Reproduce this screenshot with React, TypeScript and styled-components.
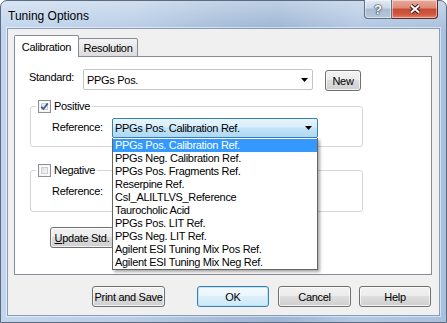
import styled, { createGlobalStyle } from 'styled-components';

const GlobalStyle = createGlobalStyle`
  html, body {
    margin: 0;
    padding: 0;
    overflow: hidden;
    background: #ffffff;
  }
  body {
    font-family: "Liberation Sans", Arial, sans-serif;
  }
`;

const Window = styled.div`
  box-sizing: border-box;
  width: 447px;
  height: 323px;
  display: flex;
  flex-direction: column;
  padding: 0 6px 6px 6px;
  border: 1px solid #5b6c82;
  border-radius: 7px 7px 0 0;
  background:
    linear-gradient(180deg, rgba(255, 255, 255, 0.35) 0px, rgba(255, 255, 255, 0) 28px),
    linear-gradient(90deg, #c3d6ee 0%, #b9cde6 30%, #a4bcd9 50%, #9db6d5 62%, #b3c8e3 80%, #aac0dd 100%);
`;

const TitleBar = styled.div`
  height: 28px;
  display: flex;
  justify-content: space-between;
  align-items: flex-start;
`;

const Caption = styled.div`
  margin: 8px 0 0 1px;
  font-size: 12px;
  line-height: 14px;
  color: #000;
`;

const CaptionButtons = styled.div`
  display: flex;
  margin: -1px 2px 0 0;
`;

const CaptionButton = styled.div<{ $close?: boolean }>`
  box-sizing: border-box;
  width: ${(p) => (p.$close ? 46 : 28)}px;
  height: 19px;
  display: flex;
  align-items: center;
  justify-content: center;
  border: 1px solid ${(p) => (p.$close ? '#5c2b25' : '#5f6f86')};
  border-top: none;
  border-left: ${(p) => (p.$close ? 'none' : undefined)};
  border-radius: ${(p) => (p.$close ? '0 0 4px 0' : '0 0 0 4px')};
  background: ${(p) =>
    p.$close
      ? 'linear-gradient(180deg, #e9aa9c 0%, #dc8a78 45%, #c74a34 50%, #d2573f 80%, #e0846c 100%)'
      : 'linear-gradient(180deg, #e3ebf4 0%, #ccd8e6 45%, #a9bbd1 50%, #b7c8dc 100%)'};
  box-shadow: inset 0 0 0 1px rgba(255, 255, 255, 0.45);
`;

const HelpGlyph = styled.span`
  font-weight: bold;
  font-size: 13px;
  line-height: 13px;
  color: #fff;
  text-shadow: 0 0 1px #26364c, 0 0 1px #26364c, 0 0 2px #26364c;
`;

const Client = styled.div`
  flex: 1;
  display: flex;
  flex-direction: column;
  background: #f0f0f0;
  border: 1px solid #8a9cb4;
  box-shadow: 0 0 0 1px rgba(255, 255, 255, 0.5);
  padding: 6px 7px 8px 6px;
  font-size: 11px;
  letter-spacing: -0.3px;
  color: #000;
`;

const TabStrip = styled.div`
  display: flex;
  align-items: flex-end;
  height: 22px;
  margin-bottom: -1px;
  position: relative;
  z-index: 1;
`;

const Tab = styled.div<{ $active?: boolean }>`
  box-sizing: border-box;
  display: flex;
  align-items: center;
  justify-content: center;
  position: relative;
  z-index: ${(p) => (p.$active ? 2 : 1)};
  width: ${(p) => (p.$active ? 65 : 60)}px;
  height: ${(p) => (p.$active ? 22 : 19)}px;
  margin-left: ${(p) => (p.$active ? 0 : -1)}px;
  border: 1px solid #898c95;
  border-bottom: ${(p) => (p.$active ? 'none' : '1px solid #898c95')};
  border-radius: 2px 2px 0 0;
  background: ${(p) => (p.$active ? '#ffffff' : 'linear-gradient(180deg, #f3f3f3 0%, #e8e8e8 50%, #dcdcdc 100%)')};
`;

const Panel = styled.div`
  position: relative;
  box-sizing: border-box;
  height: 219px;
  border: 1px solid #898c95;
  background: #ffffff;
  padding: 12px 14px 0 14px;
`;

const FieldRow = styled.div`
  display: flex;
  align-items: flex-start;
`;

const FieldLabel = styled.span<{ $width: number; $top: number }>`
  flex: none;
  width: ${(p) => p.$width}px;
  padding-top: ${(p) => p.$top}px;
  line-height: 13px;
`;

const ComboWrap = styled.div`
  position: relative;
`;

const Combo = styled.div<{ $open?: boolean; $width: number }>`
  box-sizing: border-box;
  width: ${(p) => p.$width}px;
  height: ${(p) => (p.$open ? 20 : 21)}px;
  display: flex;
  align-items: center;
  justify-content: space-between;
  padding: ${(p) => (p.$open ? '0 5px 0 2px' : '0 4px 0 3px')};
  border: 1px solid ${(p) => (p.$open ? '#3c7fb1' : '#c2c4c8')};
  border-radius: 2px;
  background: ${(p) =>
    p.$open ? 'linear-gradient(180deg, #e6f4fc 0%, #d6eefb 45%, #c2e4f8 50%, #aed8f2 100%)' : '#ffffff'};
`;

const Arrow = () => (
  <svg width="7" height="4" viewBox="0 0 7 4">
    <polygon points="0,0 7,0 3.5,4" fill="#000" />
  </svg>
);

const DropList = styled.div`
  position: absolute;
  top: 100%;
  left: 0;
  z-index: 10;
  box-sizing: border-box;
  width: 100%;
  border: 1px solid #646464;
  border-top: none;
  background: #ffffff;
  box-shadow: 2px 2px 3px rgba(0, 0, 0, 0.35);
  padding-top: 1px;
`;

const DropItem = styled.div<{ $selected?: boolean }>`
  height: 13px;
  line-height: 13px;
  padding-left: 2px;
  white-space: nowrap;
  background: ${(p) => (p.$selected ? '#3399ff' : 'transparent')};
  color: ${(p) => (p.$selected ? '#ffffff' : '#000000')};
`;

const Group = styled.fieldset<{ $top: number }>`
  box-sizing: border-box;
  width: 333px;
  min-width: 0;
  margin: ${(p) => p.$top}px 0 0 1px;
  padding: 5px 0 8px 0;
  border: 1px solid #d5d5d5;
  border-radius: 3px;
`;

const Legend = styled.legend`
  margin-left: 5px;
  padding: 0 2px;
  height: 13px;
`;

const LegendInner = styled.span`
  display: flex;
  align-items: center;
  gap: 3px;
  height: 13px;
  line-height: 13px;
`;

const GroupBody = styled.div`
  margin-left: 21px;
`;

const CheckBox = styled.span`
  box-sizing: border-box;
  width: 13px;
  height: 13px;
  display: flex;
  align-items: center;
  justify-content: center;
  border: 1px solid #8e8f8f;
  background: #ffffff;
  box-shadow: inset 0 0 0 1px #f4f4f4;
  position: relative;
  &::before {
    content: '';
    position: absolute;
    inset: 2px;
    border: 1px solid #c9cdd2;
    background: linear-gradient(135deg, #dcdfe3 0%, #f7f7f7 100%);
  }
  & > svg {
    position: relative;
  }
`;

const Button = styled.button<{ $width: number; $left?: number; $primary?: boolean }>`
  box-sizing: border-box;
  flex: none;
  width: ${(p) => p.$width}px;
  height: 21px;
  margin: 0 0 0 ${(p) => p.$left ?? 0}px;
  padding: 0;
  font-family: "Liberation Sans", Arial, sans-serif;
  font-size: 11px;
  letter-spacing: -0.3px;
  color: #000;
  border: 1px solid ${(p) => (p.$primary ? '#3c7fb1' : '#707070')};
  border-radius: 3px;
  background: ${(p) =>
    p.$primary
      ? 'linear-gradient(180deg, #f4fafd 0%, #e9f5fc 49%, #dcf0fb 50%, #cde8f8 100%)'
      : 'linear-gradient(180deg, #f2f2f2 0%, #ebebeb 49%, #dddddd 50%, #cfcfcf 100%)'};
  box-shadow: inset 0 0 0 1px ${(p) => (p.$primary ? 'rgba(180, 225, 250, 0.9)' : 'rgba(255, 255, 255, 0.7)')};
`;

const NewButton = styled(Button)`
  margin-top: 1px;
`;

const UpdateButton = styled(Button)`
  margin-top: 15px;
`;

const ButtonRow = styled.div`
  display: flex;
  margin-top: 11px;
`;

const references = [
  'PPGs Pos. Calibration Ref.',
  'PPGs Neg. Calibration Ref.',
  'PPGs Pos. Fragments Ref.',
  'Reserpine Ref.',
  'CsI_ALILTLVS_Reference',
  'Taurocholic Acid',
  'PPGs Pos. LIT Ref.',
  'PPGs Neg. LIT Ref.',
  'Agilent ESI Tuning Mix Pos Ref.',
  'Agilent ESI Tuning Mix Neg Ref.',
];

const Check = ({ checked }: { checked?: boolean }) => (
  <CheckBox>
    {checked && (
      <svg width="9" height="9" viewBox="0 0 9 9">
        <path d="M1.2 4.6 L3.4 7 L7.8 1.4" stroke="#3d5a8f" strokeWidth="1.7" fill="none" />
      </svg>
    )}
  </CheckBox>
);

export default function App() {
  return (
    <>
      <GlobalStyle />
      <Window>
        <TitleBar>
          <Caption>Tuning Options</Caption>
          <CaptionButtons>
            <CaptionButton>
              <HelpGlyph>?</HelpGlyph>
            </CaptionButton>
            <CaptionButton $close>
              <svg width="12" height="10" viewBox="0 0 12 10">
                <path d="M2 1.5 L10 8.5 M10 1.5 L2 8.5" stroke="#3b1a16" strokeWidth="4" />
                <path d="M2 1.5 L10 8.5 M10 1.5 L2 8.5" stroke="#ffffff" strokeWidth="2" />
              </svg>
            </CaptionButton>
          </CaptionButtons>
        </TitleBar>
        <Client>
          <TabStrip>
            <Tab $active>Calibration</Tab>
            <Tab>Resolution</Tab>
          </TabStrip>
          <Panel>
            <FieldRow>
              <FieldLabel $width={54} $top={2}>Standard:</FieldLabel>
              <Combo $width={230}>
                <span>PPGs Pos.</span>
                <Arrow />
              </Combo>
              <NewButton $width={36} $left={12}>New</NewButton>
            </FieldRow>

            <Group $top={9}>
              <Legend>
                <LegendInner>
                  <Check checked />
                  Positive
                </LegendInner>
              </Legend>
              <GroupBody>
                <FieldRow>
                  <FieldLabel $width={60} $top={3}>Reference:</FieldLabel>
                  <ComboWrap>
                    <Combo $open $width={206}>
                      <span>PPGs Pos. Calibration Ref.</span>
                      <Arrow />
                    </Combo>
                    <DropList>
                      {references.map((r, i) => (
                        <DropItem key={r} $selected={i === 0}>
                          {r}
                        </DropItem>
                      ))}
                    </DropList>
                  </ComboWrap>
                </FieldRow>
              </GroupBody>
            </Group>

            <Group $top={17}>
              <Legend>
                <LegendInner>
                  <Check />
                  Negative
                </LegendInner>
              </Legend>
              <GroupBody>
                <FieldRow>
                  <FieldLabel $width={60} $top={3}>Reference:</FieldLabel>
                  <Combo $width={206}>
                    <span />
                    <Arrow />
                  </Combo>
                </FieldRow>
              </GroupBody>
            </Group>

            <UpdateButton $width={64} $left={21}>
              <u>U</u>pdate Std.
            </UpdateButton>
          </Panel>
          <ButtonRow>
            <Button $width={73} $left={78}>Print and Save</Button>
            <Button $width={72} $left={32} $primary>OK</Button>
            <Button $width={73} $left={9}>Cancel</Button>
            <Button $width={72} $left={8}>Help</Button>
          </ButtonRow>
        </Client>
      </Window>
    </>
  );
}
